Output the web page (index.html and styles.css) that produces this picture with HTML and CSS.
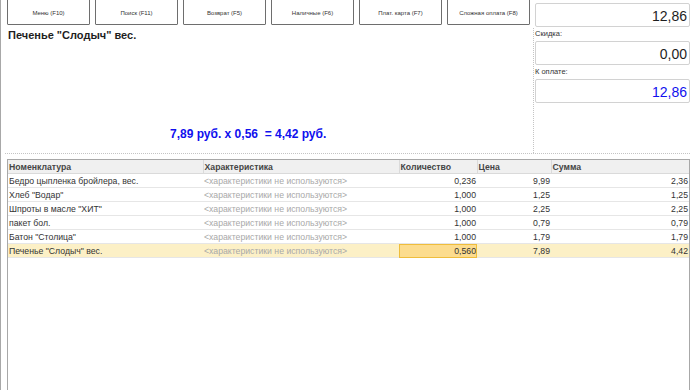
FILE: index.html
```html
<!DOCTYPE html>
<html lang="ru">
<head>
    <meta charset="UTF-8">
    <title>Рабочее место кассира</title>
    <link rel="stylesheet" href="styles.css">
</head>
<body>
    <div class="head">
        <div class="main">
            <div class="actions">
                <button class="cmd">Меню (F10)</button>
                <button class="cmd">Поиск (F11)</button>
                <button class="cmd">Возврат (F5)</button>
                <button class="cmd">Наличные (F6)</button>
                <button class="cmd">Плат. карта (F7)</button>
                <button class="cmd">Сложная оплата (F8)</button>
            </div>
            <div class="info">
                <div class="item-title">Печенье "Слодыч" вес.</div>
                <div class="calc">7,89 руб. x 0,56&nbsp; = 4,42 руб.</div>
            </div>
        </div>

        <!-- Итоги чека -->
        <div class="totals">
            <div class="total-box">12,86</div>
            <div class="total-label">Скидка:</div>
            <div class="total-box">0,00</div>
            <div class="total-label">К оплате:</div>
            <div class="total-box total-pay">12,86</div>
        </div>
    </div>

    <div class="grid">
        <table class="goods">
            <colgroup>
                <col style="width: 195px">
                <col style="width: 196px">
                <col style="width: 78px">
                <col style="width: 74px">
                <col style="width: 138px">
            </colgroup>
            <thead>
                <tr>
                    <th>Номенклатура</th>
                    <th>Характеристика</th>
                    <th>Количество</th>
                    <th>Цена</th>
                    <th>Сумма</th>
                </tr>
            </thead>
            <tbody>
                <tr>
                    <td>Бедро цыпленка бройлера, вес.</td>
                    <td class="muted">&lt;характеристики не используются&gt;</td>
                    <td class="num">0,236</td>
                    <td class="num">9,99</td>
                    <td class="num">2,36</td>
                </tr>
                <tr>
                    <td>Хлеб "Водар"</td>
                    <td class="muted">&lt;характеристики не используются&gt;</td>
                    <td class="num">1,000</td>
                    <td class="num">1,25</td>
                    <td class="num">1,25</td>
                </tr>
                <tr>
                    <td>Шпроты в масле "ХИТ"</td>
                    <td class="muted">&lt;характеристики не используются&gt;</td>
                    <td class="num">1,000</td>
                    <td class="num">2,25</td>
                    <td class="num">2,25</td>
                </tr>
                <tr>
                    <td>пакет бол.</td>
                    <td class="muted">&lt;характеристики не используются&gt;</td>
                    <td class="num">1,000</td>
                    <td class="num">0,79</td>
                    <td class="num">0,79</td>
                </tr>
                <tr>
                    <td>Батон "Столица"</td>
                    <td class="muted">&lt;характеристики не используются&gt;</td>
                    <td class="num">1,000</td>
                    <td class="num">1,79</td>
                    <td class="num">1,79</td>
                </tr>
                <tr class="current">
                    <td>Печенье "Слодыч" вес.</td>
                    <td class="muted">&lt;характеристики не используются&gt;</td>
                    <td class="num active-cell">0,560</td>
                    <td class="num">7,89</td>
                    <td class="num">4,42</td>
                </tr>
            </tbody>
        </table>
    </div>
</body>
</html>
```

FILE: styles.css
```css
html, body {
    height: 100%;
}

body {
    margin: 0;
    font-family: "Liberation Sans", Arial, sans-serif;
    color: #222;
    background: #fff;
    border-left: 1px solid #a8a8a8;
    box-sizing: border-box;
    overflow: hidden;
}

/* Верхняя часть: кнопки, товар, итоги */
.head {
    display: flex;
    height: 154px;
    margin: 0 10px 0 4px;
    border-bottom: 1px dotted #c4c4c4;
    box-sizing: border-box;
}

.main {
    width: 529px;
    display: flex;
    flex-direction: column;
}

.actions {
    display: flex;
    gap: 5px;
    padding-left: 2px;
    margin-top: -5px;
}

.cmd {
    width: 83px;
    height: 30px;
    padding: 5px 0 0;
    border: 1px solid #6e6e6e;
    border-radius: 1px;
    background: #fff;
    font-family: inherit;
    font-size: 6px;
    color: #333;
}

.info {
    flex: 1;
    margin-top: 3px;
    border-right: 1px dotted #c4c4c4;
}

.item-title {
    padding-left: 3px;
    font-size: 11px;
    font-weight: bold;
    line-height: 14px;
    color: #1e1e1e;
}

.calc {
    margin-top: 85px;
    padding-left: 165px;
    font-size: 12px;
    font-weight: bold;
    line-height: 14px;
    color: #1010ee;
}

.totals {
    flex: 1;
    padding: 3px 0 0 1px;
}

.total-box {
    height: 24px;
    padding-right: 2px;
    border: 1px solid #d2d2d2;
    border-radius: 2px;
    box-sizing: border-box;
    text-align: right;
    font-size: 14px;
    line-height: 24px;
    color: #1e1e1e;
}

.total-pay {
    color: #1010ee;
}

.total-label {
    height: 14px;
    font-size: 7.5px;
    line-height: 14px;
    color: #333;
}

/* Табличная часть */
.grid {
    width: 683px;
    height: 260px;
    margin: 5px 0 0 6px;
    border: 1px solid #a8a8a8;
    box-sizing: border-box;
    overflow: hidden;
    background: #fff;
}

.goods {
    width: 681px;
    table-layout: fixed;
    border-collapse: collapse;
    font-size: 8.7px;
}

.goods th {
    height: 13px;
    padding: 0 1px;
    background: #f0f0f0;
    border-bottom: 1px solid #dadada;
    border-left: 1px solid #dadada;
    text-align: left;
    font-weight: bold;
    color: #454545;
}

.goods th:first-child {
    border-left: none;
}

.goods td {
    height: 13px;
    padding: 0 1px;
    border-bottom: 1px solid #e6e6e6;
    white-space: nowrap;
    overflow: hidden;
    color: #333;
}

.goods td.muted {
    color: #a9a9a9;
}

.goods td.num {
    text-align: right;
}

.goods tr.current td {
    background: #fcf0c6;
}

.goods tr.current td.active-cell {
    background: #fcdc8e;
    outline: 1px solid #efbd3c;
    outline-offset: -1px;
}
```
